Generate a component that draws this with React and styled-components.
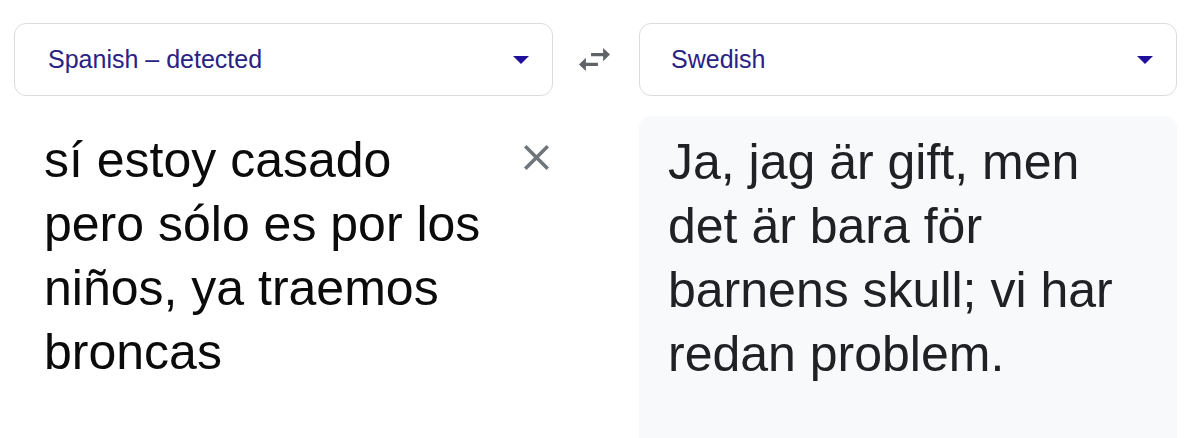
import React from "react";
import styled, { createGlobalStyle } from "styled-components";

const GlobalStyle = createGlobalStyle`
  html, body {
    margin: 0;
    padding: 0;
    background: #ffffff;
    font-family: "Liberation Sans", Arial, sans-serif;
  }
`;

// Main page grid: two columns with the swap button between them
const Page = styled.div`
  display: grid;
  grid-template-columns: 539px 86px 1fr;
  grid-template-rows: 73px 1fr;
  row-gap: 20px;
  height: 100vh;
  box-sizing: border-box;
  padding: 23px 23px 0 14px;
  overflow: hidden;
`;

const LangSelect = styled.div`
  display: flex;
  align-items: center;
  justify-content: space-between;
  box-sizing: border-box;
  height: 73px;
  padding: 0 23px 0 ${(p) => p.$padLeft}px;
  border: 1px solid #dadce0;
  border-radius: 12px;
  background: #fff;
`;

const LangLabel = styled.span`
  font-size: 25px;
  color: #2b2183;
`;

const SwapButton = styled.div`
  display: flex;
  align-items: center;
  justify-content: center;
  padding-right: 4px;
  color: #5f6368;
`;

const SourcePane = styled.div`
  display: flex;
  align-items: flex-start;
  gap: 30px;
  padding-left: 30px;
  padding-right: 4px;
`;

const SourceText = styled.div`
  flex: 1;
  padding-top: 12px;
  font-size: 50px;
  line-height: 64px;
  color: #0b0b0b;
`;

const ClearButton = styled.div`
  display: flex;
  margin-top: 29px;
  color: #70757a;
`;

const TargetPane = styled.div`
  grid-column: 3;
  box-sizing: border-box;
  padding: 14px 31px 0 29px;
  background: #f8f9fa;
  border-radius: 12px 12px 0 0;
`;

const TargetText = styled.div`
  font-size: 50px;
  line-height: 64px;
  color: #202124;
`;

const DropArrow = () => (
  <svg width="16" height="8" viewBox="7 10 10 5" fill="#1f0f9c">
    <path d="M7 10l5 5 5-5z" />
  </svg>
);

function App() {
  return (
    <>
      <GlobalStyle />
      <Page>
        <LangSelect $padLeft={33}>
          <LangLabel>Spanish – detected</LangLabel>
          <DropArrow />
        </LangSelect>
        <SwapButton>
          <svg width="31" height="23" viewBox="3 5 18 14" fill="currentColor" preserveAspectRatio="none">
            <path d="M6.99 11L3 15l3.99 4v-3H14v-2H6.99v-3zM21 9l-4-4v3h-7v2h7v3l4-4z" />
          </svg>
        </SwapButton>
        <LangSelect $padLeft={31}>
          <LangLabel>Swedish</LangLabel>
          <DropArrow />
        </LangSelect>

        <SourcePane>
          <SourceText>sí estoy casado pero sólo es por los niños, ya traemos broncas</SourceText>
          <ClearButton>
            <svg width="25" height="25" viewBox="5 5 14 14" fill="currentColor">
              <path d="M19 6.41L17.59 5 12 10.59 6.41 5 5 6.41 10.59 12 5 17.59 6.41 19 12 13.41 17.59 19 19 17.59 13.41 12z" />
            </svg>
          </ClearButton>
        </SourcePane>
        <TargetPane>
          <TargetText>Ja, jag är gift, men det är bara för barnens skull; vi har redan problem.</TargetText>
        </TargetPane>
      </Page>
    </>
  );
}

export default App;
